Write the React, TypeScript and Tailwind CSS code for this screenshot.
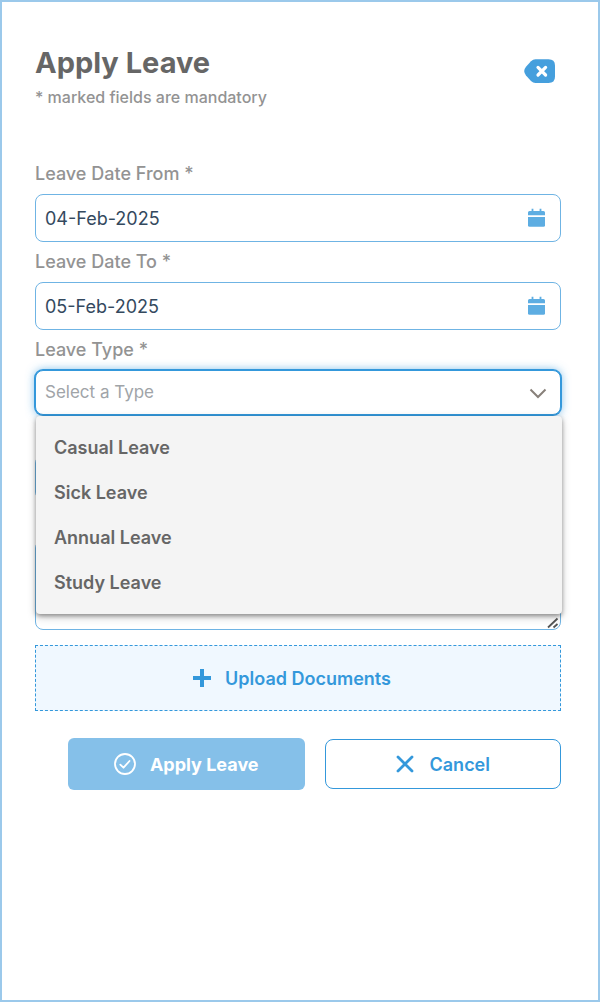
import { useState } from "react";

const leaveTypes = ["Casual Leave", "Sick Leave", "Annual Leave", "Study Leave"];

const labelClass = "block h-10 text-[18px] leading-10 font-medium text-[#939393]";
const fieldClass =
  "block w-full rounded-lg border border-[#6fb4e4] bg-white px-[9px] text-[18px] text-[#34495e] outline-none";

function CalendarIcon() {
  return (
    <svg
      viewBox="0 0 17 19"
      className="pointer-events-none absolute top-[14px] right-[16px] h-[19px] w-[17px]"
      fill="#5dade2"
    >
      <path d="M3.600 0.800H5.400V3H11.600V0.800H13.400V3H15.500Q17 3 17 4.500V7.300H0V4.500Q0 3 1.500 3H3.600Z" />
      <path d="M0 8.900H17V17.300Q17 18.800 15.500 18.800H1.500Q0 18.800 0 17.300Z" />
    </svg>
  );
}

function DateField({ id, label, value }: { id: string; label: string; value: string }) {
  return (
    <div>
      <label htmlFor={id} className={labelClass}>
        {label}
      </label>
      <div className="relative">
        <input id={id} type="text" defaultValue={value} className={`${fieldClass} h-12 pr-12`} />
        <CalendarIcon />
      </div>
    </div>
  );
}

export default function App() {
  const [open, setOpen] = useState(true);
  const [type, setType] = useState("");

  const choose = (name: string) => {
    setType(name);
    setOpen(false);
  };

  return (
    <div className="min-h-screen border-2 border-[#9bc9eb] bg-white pt-[43px] pr-[37px] pb-8 pl-[33px] font-['Inter',sans-serif]">
      <header className="flex items-start justify-between">
        <div>
          <h1 className="text-[29px] leading-9 font-bold text-[#666666]">Apply Leave</h1>
          <p className="mt-1 text-[16px] leading-6 font-medium text-[#939393]">* marked fields are mandatory</p>
        </div>
        <button type="button" aria-label="Close" className="mt-[14px] mr-[6px]">
          <svg viewBox="0 0 31 24" className="h-6 w-[31px]">
            <path
              d="M11.500 0.300H24.500Q31 0.300 31 6.500V17.700Q31 23.900 24.500 23.900H11.500Q9 23.900 7 22L2 16.500Q-1.600 12.100 2 7.700L7 2.200Q9 0.300 11.500 0.300Z"
              fill="#459fdd"
            />
            <path d="M14 8.400L21.600 16M21.600 8.400L14 16" stroke="#fff" strokeWidth="3.200" strokeLinecap="round" />
          </svg>
        </button>
      </header>

      <form className="mt-[45px]" onSubmit={(e) => e.preventDefault()}>
        <DateField id="date-from" label="Leave Date From *" value="04-Feb-2025" />
        <DateField id="date-to" label="Leave Date To *" value="05-Feb-2025" />

        <div>
          <label htmlFor="leave-type" className={labelClass}>
            Leave Type *
          </label>
          <div className="relative">
            <select
              id="leave-type"
              value={type}
              onChange={(e) => choose(e.target.value)}
              className="block h-[45px] w-full appearance-none rounded-lg border border-[#3498db] bg-white px-[9px] text-[17px] text-[#a0a4a8] shadow-[0_0_0_1px_#3498db,0_0_10px_rgba(52,152,219,0.7)] outline-none"
            >
              <option value="">Select a Type</option>
              {leaveTypes.map((name) => (
                <option key={name}>{name}</option>
              ))}
            </select>
            <svg
              viewBox="0 0 18 11"
              className="pointer-events-none absolute top-[18px] right-[14px] h-[11px] w-[18px]"
              fill="none"
              stroke="#88807a"
              strokeWidth="2"
            >
              <path d="M1.500 1.500L9 9L16.500 1.500" />
            </svg>
            {open && (
              <ul className="absolute top-[46px] -right-px left-px z-10 rounded-[4px] bg-[#f4f4f4] py-[9px] shadow-[0_2px_4px_rgba(0,0,0,0.35),0_3px_10px_rgba(0,0,0,0.2)]">
                {leaveTypes.map((name) => (
                  <li key={name}>
                    <button
                      type="button"
                      onClick={() => choose(name)}
                      className="block h-[45px] w-full px-[18px] text-left text-[18px] font-semibold text-[#666666]"
                    >
                      {name}
                    </button>
                  </li>
                ))}
              </ul>
            )}
          </div>
        </div>

        <input type="text" aria-label="Session" className={`${fieldClass} mt-10 h-[45px]`} />

        <div className="relative mt-10">
          <textarea aria-label="Reason" className={`${fieldClass} h-[90px] resize-none py-2`} />
          <svg
            viewBox="0 0 12 12"
            className="pointer-events-none absolute right-[2px] bottom-[1px] h-3 w-3"
            stroke="#555"
            strokeWidth="1.800"
          >
            <path d="M1 10.500L10.500 1.500M6.500 10.500L10.500 7" />
          </svg>
        </div>

        <button
          type="button"
          className="mt-[15px] flex h-[66px] w-full items-center justify-center gap-[14px] border border-dashed border-[#3498db] bg-[#f0f8ff] pr-3 text-[18px] font-semibold text-[#3498db]"
        >
          <svg viewBox="0 0 18 18" className="h-[18px] w-[18px]" stroke="currentColor" strokeWidth="4">
            <path d="M9 0V18M0 9H18" />
          </svg>
          Upload Documents
        </button>

        <div className="mt-[27px] grid grid-cols-2 items-center gap-5 pl-[33px]">
          <button
            type="submit"
            className="flex h-[52px] items-center justify-center gap-[14px] rounded-md bg-[#85c0e9] text-[18px] font-bold text-white"
          >
            <svg
              viewBox="0 0 22 22"
              className="h-[22px] w-[22px]"
              fill="none"
              stroke="currentColor"
              strokeWidth="1.800"
              strokeLinecap="round"
              strokeLinejoin="round"
            >
              <circle cx="11" cy="11" r="10" />
              <path d="M6.300 11.600L9.500 14.700L15.500 8" />
            </svg>
            Apply Leave
          </button>
          <button
            type="button"
            className="flex h-[50px] items-center justify-center gap-4 rounded-lg border border-[#3498db] bg-white text-[18px] font-semibold text-[#3498db]"
          >
            <svg viewBox="0 0 18 18" className="h-[18px] w-[18px]" stroke="currentColor" strokeWidth="2.800" strokeLinecap="round">
              <path d="M2 2L16 16M16 2L2 16" />
            </svg>
            Cancel
          </button>
        </div>
      </form>
    </div>
  );
}
